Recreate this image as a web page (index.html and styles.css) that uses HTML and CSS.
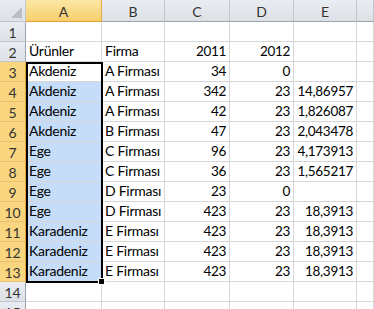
FILE: index.html
```html
<!DOCTYPE html>
<html lang="tr">
<head>
<meta charset="utf-8">
<title>Sheet</title>
<link rel="stylesheet" href="styles.css">
</head>
<body>
<div class="sheet">
  <div class="grid">
    <div class="hd corner"><span class="tri"></span></div>
    <div class="hd col sel">A</div>
    <div class="hd col">B</div>
    <div class="hd col">C</div>
    <div class="hd col">D</div>
    <div class="hd col">E</div>
    <div class="hd col last"></div>

    <div class="hd rowh">1</div>
    <div class="c"></div><div class="c"></div><div class="c"></div><div class="c"></div><div class="c"></div><div class="c"></div>

    <div class="hd rowh">2</div>
    <div class="c">Ürünler</div><div class="c">Firma</div><div class="c n">2011</div><div class="c n">2012</div><div class="c"></div><div class="c"></div>

    <div class="hd rowh sel">3</div>
    <div class="c">Akdeniz</div><div class="c">A Firması</div><div class="c n">34</div><div class="c n">0</div><div class="c"></div><div class="c"></div>

    <div class="hd rowh sel">4</div>
    <div class="c hl">Akdeniz</div><div class="c">A Firması</div><div class="c n">342</div><div class="c n">23</div><div class="c n">14,86957</div><div class="c"></div>

    <div class="hd rowh sel">5</div>
    <div class="c hl">Akdeniz</div><div class="c">A Firması</div><div class="c n">42</div><div class="c n">23</div><div class="c n">1,826087</div><div class="c"></div>

    <div class="hd rowh sel">6</div>
    <div class="c hl">Akdeniz</div><div class="c">B Firması</div><div class="c n">47</div><div class="c n">23</div><div class="c n">2,043478</div><div class="c"></div>

    <div class="hd rowh sel">7</div>
    <div class="c hl">Ege</div><div class="c">C Firması</div><div class="c n">96</div><div class="c n">23</div><div class="c n">4,173913</div><div class="c"></div>

    <div class="hd rowh sel">8</div>
    <div class="c hl">Ege</div><div class="c">C Firması</div><div class="c n">36</div><div class="c n">23</div><div class="c n">1,565217</div><div class="c"></div>

    <div class="hd rowh sel">9</div>
    <div class="c hl">Ege</div><div class="c">D Firması</div><div class="c n">23</div><div class="c n">0</div><div class="c"></div><div class="c"></div>

    <div class="hd rowh sel">10</div>
    <div class="c hl">Ege</div><div class="c">D Firması</div><div class="c n">423</div><div class="c n">23</div><div class="c n">18,3913</div><div class="c"></div>

    <div class="hd rowh sel">11</div>
    <div class="c hl">Karadeniz</div><div class="c">E Firması</div><div class="c n">423</div><div class="c n">23</div><div class="c n">18,3913</div><div class="c"></div>

    <div class="hd rowh sel">12</div>
    <div class="c hl">Karadeniz</div><div class="c">E Firması</div><div class="c n">423</div><div class="c n">23</div><div class="c n">18,3913</div><div class="c"></div>

    <div class="hd rowh sel">13</div>
    <div class="c hl">Karadeniz</div><div class="c">E Firması</div><div class="c n">423</div><div class="c n">23</div><div class="c n">18,3913</div><div class="c"></div>

    <div class="hd rowh">14</div>
    <div class="c"></div><div class="c"></div><div class="c"></div><div class="c"></div><div class="c"></div><div class="c"></div>

    <div class="hd rowh">15</div>
    <div class="c"></div><div class="c"></div><div class="c"></div><div class="c"></div><div class="c"></div><div class="c"></div>
  </div>
  <div class="selbox"></div>
  <div class="handle"></div>
</div>
</body>
</html>
```

FILE: styles.css
```css
html, body {
  margin: 0;
  padding: 0;
  background: #ffffff;
  overflow: hidden;
}
.sheet {
  position: relative;
  width: 374px;
  height: 309px;
  overflow: hidden;
  font-family: Lato, "Open Sans", sans-serif;
  font-size: 14px;
  color: #000;
}
.grid {
  display: grid;
  grid-template-columns: 26px 76px 63px 65px 64px 63px 1fr;
  grid-template-rows: 22px repeat(15, 20px);
}
.grid > div {
  box-sizing: border-box;
  border-right: 1px solid #d6d6d6;
  border-bottom: 1px solid #d6d6d6;
  white-space: nowrap;
  overflow: hidden;
}
.c {
  display: flex;
  align-items: flex-end;
  padding: 0 3px 2px 3px;
  line-height: 16px;
  letter-spacing: -0.25px;
}
.c.n {
  justify-content: flex-end;
  padding-right: 3px;
  font-size: 13.5px;
  letter-spacing: -0.3px;
}
.c.hl {
  background: #c5ddf8;
}
.hd {
  display: flex;
  align-items: center;
  justify-content: center;
  color: #333;
  font-size: 14px;
  background: linear-gradient(#e9ecf0, #dde1e6);
}
.grid > .hd {
  border-right: 1px solid #c2c7cd;
  border-bottom: 1px solid #c2c7cd;
}
.grid > .col {
  border-bottom: 1px solid #9aa3ae;
  padding-top: 1px;
}
.grid > .col.sel {
  background: linear-gradient(#fbe7a3, #f7cf6c);
  border-right: 1px solid #e3ad45;
  border-bottom: 1px solid #e2a231;
}
.grid > .rowh {
  border-right: 1px solid #9aa3ae;
  padding-top: 1px;
}
.grid > .rowh.sel {
  background: #f8d57e;
  border-bottom: 1px solid #e9c170;
  border-right: 1px solid #e2a231;
}
.corner {
  position: relative;
}
.tri {
  position: absolute;
  right: 3px;
  bottom: 3px;
  width: 0;
  height: 0;
  border-left: 11px solid transparent;
  border-bottom: 11px solid #b9bec5;
}
.selbox {
  position: absolute;
  left: 26px;
  top: 62px;
  width: 77px;
  height: 221px;
  box-sizing: border-box;
  border: 2px solid #000;
  pointer-events: none;
}
.handle {
  position: absolute;
  left: 99px;
  top: 279px;
  width: 5px;
  height: 5px;
  background: #000;
  box-shadow: 0 0 0 1px #fff;
}
```
